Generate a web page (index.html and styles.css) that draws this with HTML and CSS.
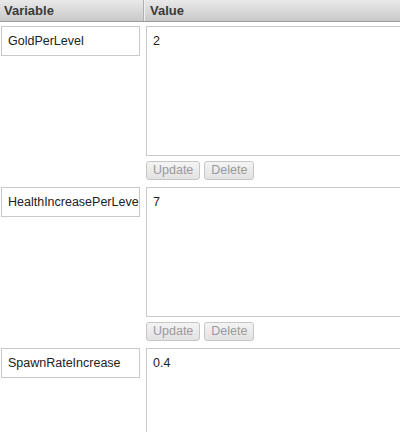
FILE: index.html
```html
<!DOCTYPE html>
<html>
<head>
<meta charset="utf-8">
<link rel="stylesheet" href="styles.css">
</head>
<body>
<div class="table">
  <div class="head">
    <div class="hcell hvar">Variable</div>
    <div class="hcell hval">Value</div>
  </div>
  <div class="row">
    <div class="cvar"><div class="field">GoldPerLevel</div></div>
    <div class="cval">
      <div class="area">2</div>
      <div class="actions"><span class="btn">Update</span><span class="btn">Delete</span></div>
    </div>
  </div>
  <div class="row">
    <div class="cvar"><div class="field">HealthIncreasePerLevel</div></div>
    <div class="cval">
      <div class="area">7</div>
      <div class="actions"><span class="btn">Update</span><span class="btn">Delete</span></div>
    </div>
  </div>
  <div class="row">
    <div class="cvar"><div class="field">SpawnRateIncrease</div></div>
    <div class="cval">
      <div class="area">0.4</div>
    </div>
  </div>
</div>
</body>
</html>
```
FILE: styles.css
```css
html, body {
  margin: 0;
  padding: 0;
  background: #fff;
  overflow: hidden;
}
body {
  font-family: "Liberation Sans", Arial, sans-serif;
  font-size: 12.5px;
  color: #222;
  width: 400px;
  height: 432px;
}
.table {
  width: 400px;
}
.head {
  display: grid;
  grid-template-columns: 144px 1fr;
  height: 21px;
  background: linear-gradient(#e9e9e9, #c9c9c9);
  border-bottom: 1px solid #9a9a9a;
}
.hcell {
  font-weight: bold;
  color: #3a3a3a;
  font-size: 13px;
  line-height: 21px;
}
.hvar {
  padding-left: 4px;
  border-right: 1px solid #b0b0b0;
}
.hval {
  padding-left: 5px;
  border-left: 1px solid #f2f2f2;
}
.row {
  display: grid;
  grid-template-columns: 146px 1fr;
  padding-top: 4px;
  padding-bottom: 3px;
}
.cvar {
  padding-left: 1px;
}
.field {
  box-sizing: border-box;
  width: 139px;
  height: 30px;
  border: 1px solid #c9c9c9;
  padding: 0 6px;
  line-height: 28px;
  white-space: nowrap;
  overflow: hidden;
}
.cval {
  min-width: 0;
}
.area {
  box-sizing: border-box;
  width: 270px;
  height: 130px;
  border: 1px solid #c9c9c9;
  padding: 7px 6px;
  line-height: 15px;
}
.actions {
  display: flex;
  gap: 4px;
  margin-top: 5px;
}
.btn {
  box-sizing: border-box;
  height: 19px;
  padding: 0 6px;
  border: 1px solid #c6c6c6;
  border-radius: 3px;
  background: linear-gradient(#f4f4f4, #e2e2e2);
  color: #9a9a9a;
  font-size: 12.5px;
  line-height: 17px;
}
```
